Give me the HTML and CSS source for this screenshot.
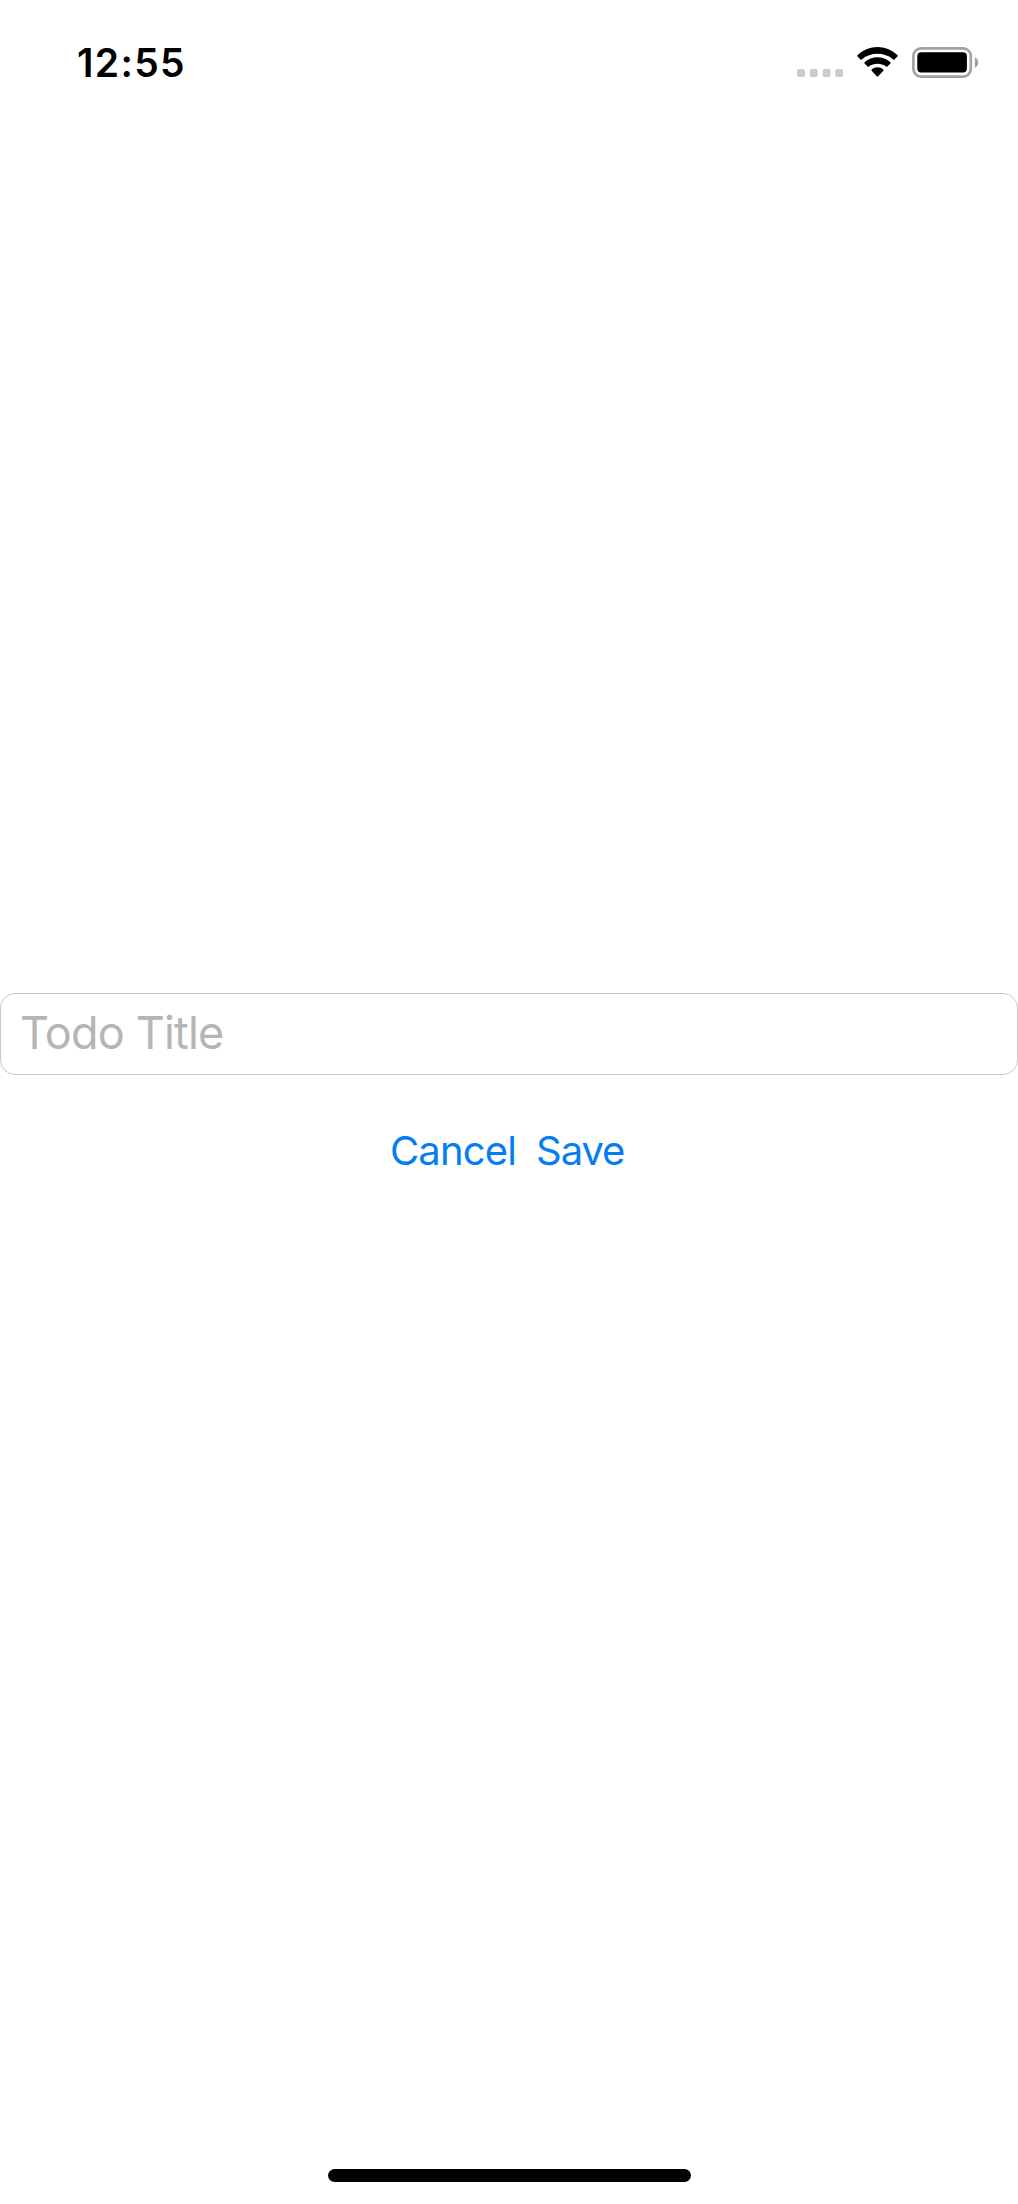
FILE: index.html
```html
<!DOCTYPE html>
<html lang="en">
<head>
<meta charset="utf-8">
<title>New Todo</title>
<link rel="stylesheet" href="styles.css">
</head>
<body>
<div class="screen">
  <header class="status-bar">
    <span class="time">12:55</span>
    <div class="indicators">
      <svg class="signal" width="46" height="8" viewBox="0 0 46 8" fill="#cbcbcb">
        <rect width="8" height="8" rx="2"/><rect x="12.8" width="8" height="8" rx="2"/><rect x="25.6" width="8" height="8" rx="2"/><rect x="38.2" width="8" height="8" rx="2"/>
      </svg>
      <svg class="wifi" width="41" height="30" viewBox="0 0 41 30">
        <path d="M.6 8.1C11.8-2.7 29.2-2.7 40.4 8.1Q41 8.8 40.4 9.5L37.5 12.4Q36.9 13 36.2 12.4C27.4 5 13.6 5 4.8 12.4Q4.1 13 3.5 12.4L.6 9.5Q0 8.8 .6 8.1Z"/>
        <path d="M7.6 15.2C14.8 8.5 26.2 8.5 33.4 15.2Q34.1 15.9 33.4 16.6L30.4 19.6Q29.8 20.2 29.1 19.6C24.2 15.8 16.8 15.8 11.9 19.6Q11.2 20.2 10.6 19.6L7.6 16.6Q6.9 15.9 7.6 15.2Z"/>
        <path d="M14.7 22.4C18 19.6 23 19.6 26.3 22.4Q27 23.1 26.3 23.8L21.2 29.2Q20.5 29.9 19.8 29.2L14.7 23.8Q14 23.1 14.7 22.4Z"/>
      </svg>
      <svg class="battery" width="67" height="31" viewBox="0 0 67 31">
        <rect x="1.4" y="1.4" width="57.4" height="28.2" rx="7.6" fill="none" stroke="#a1a1a1" stroke-width="2.6"/>
        <rect x="5.3" y="5.2" width="49.6" height="20.4" rx="4"/>
        <path d="M62.8 10.2C67.4 12 67.4 19.2 62.8 21Z" fill="#a1a1a1"/>
      </svg>
    </div>
  </header>
  <main class="form">
    <input class="title-field" type="text" placeholder="Todo Title" aria-label="Todo Title">
    <div class="actions">
      <button class="action cancel" type="button">Cancel</button>
      <button class="action save" type="button">Save</button>
    </div>
  </main>
  <footer class="home-area"><div class="home-indicator"></div></footer>
</div>
</body>
</html>
```
FILE: styles.css
```css
* { box-sizing: border-box; }
body { margin: 0; background: #fff; font-family: Inter, "Liberation Sans", sans-serif; }
.screen { height: 2204px; display: flex; flex-direction: column; overflow: hidden; }
.status-bar {
  height: 132px;
  padding: 39px 39px 0 77px;
  display: flex;
  justify-content: space-between;
  align-items: flex-start;
}
.time { font-size: 39px; line-height: 48px; font-weight: 600; letter-spacing: 1.3px; color: #000; }
.indicators { display: flex; align-items: flex-start; padding-top: 8px; }
.signal { margin: 22px 14px 0 0; }
.wifi { margin-right: 14px; }
.form { flex: 1; padding-top: 861px; }
.title-field {
  display: block;
  width: 100%;
  height: 82px;
  padding: 0 19px 3px;
  border: 1px solid #c8c8c8;
  border-radius: 15px;
  background: #fff;
  font: 400 45px/54px Inter, "Liberation Sans", sans-serif;
  letter-spacing: -0.8px;
}
.title-field::placeholder { color: #b5b5b5; opacity: 1; }
.actions { display: flex; padding: 52px 0 0 390px; gap: 20px; }
.action {
  padding: 0;
  border: 0;
  background: none;
  color: #067df5;
  font: 400 40px/48px Inter, "Liberation Sans", sans-serif;
  letter-spacing: -0.85px;
}
.save { letter-spacing: -1.1px; }
.home-area { height: 35px; display: flex; justify-content: center; }
.home-indicator { width: 363px; height: 13px; border-radius: 7px; background: #000; }
```
